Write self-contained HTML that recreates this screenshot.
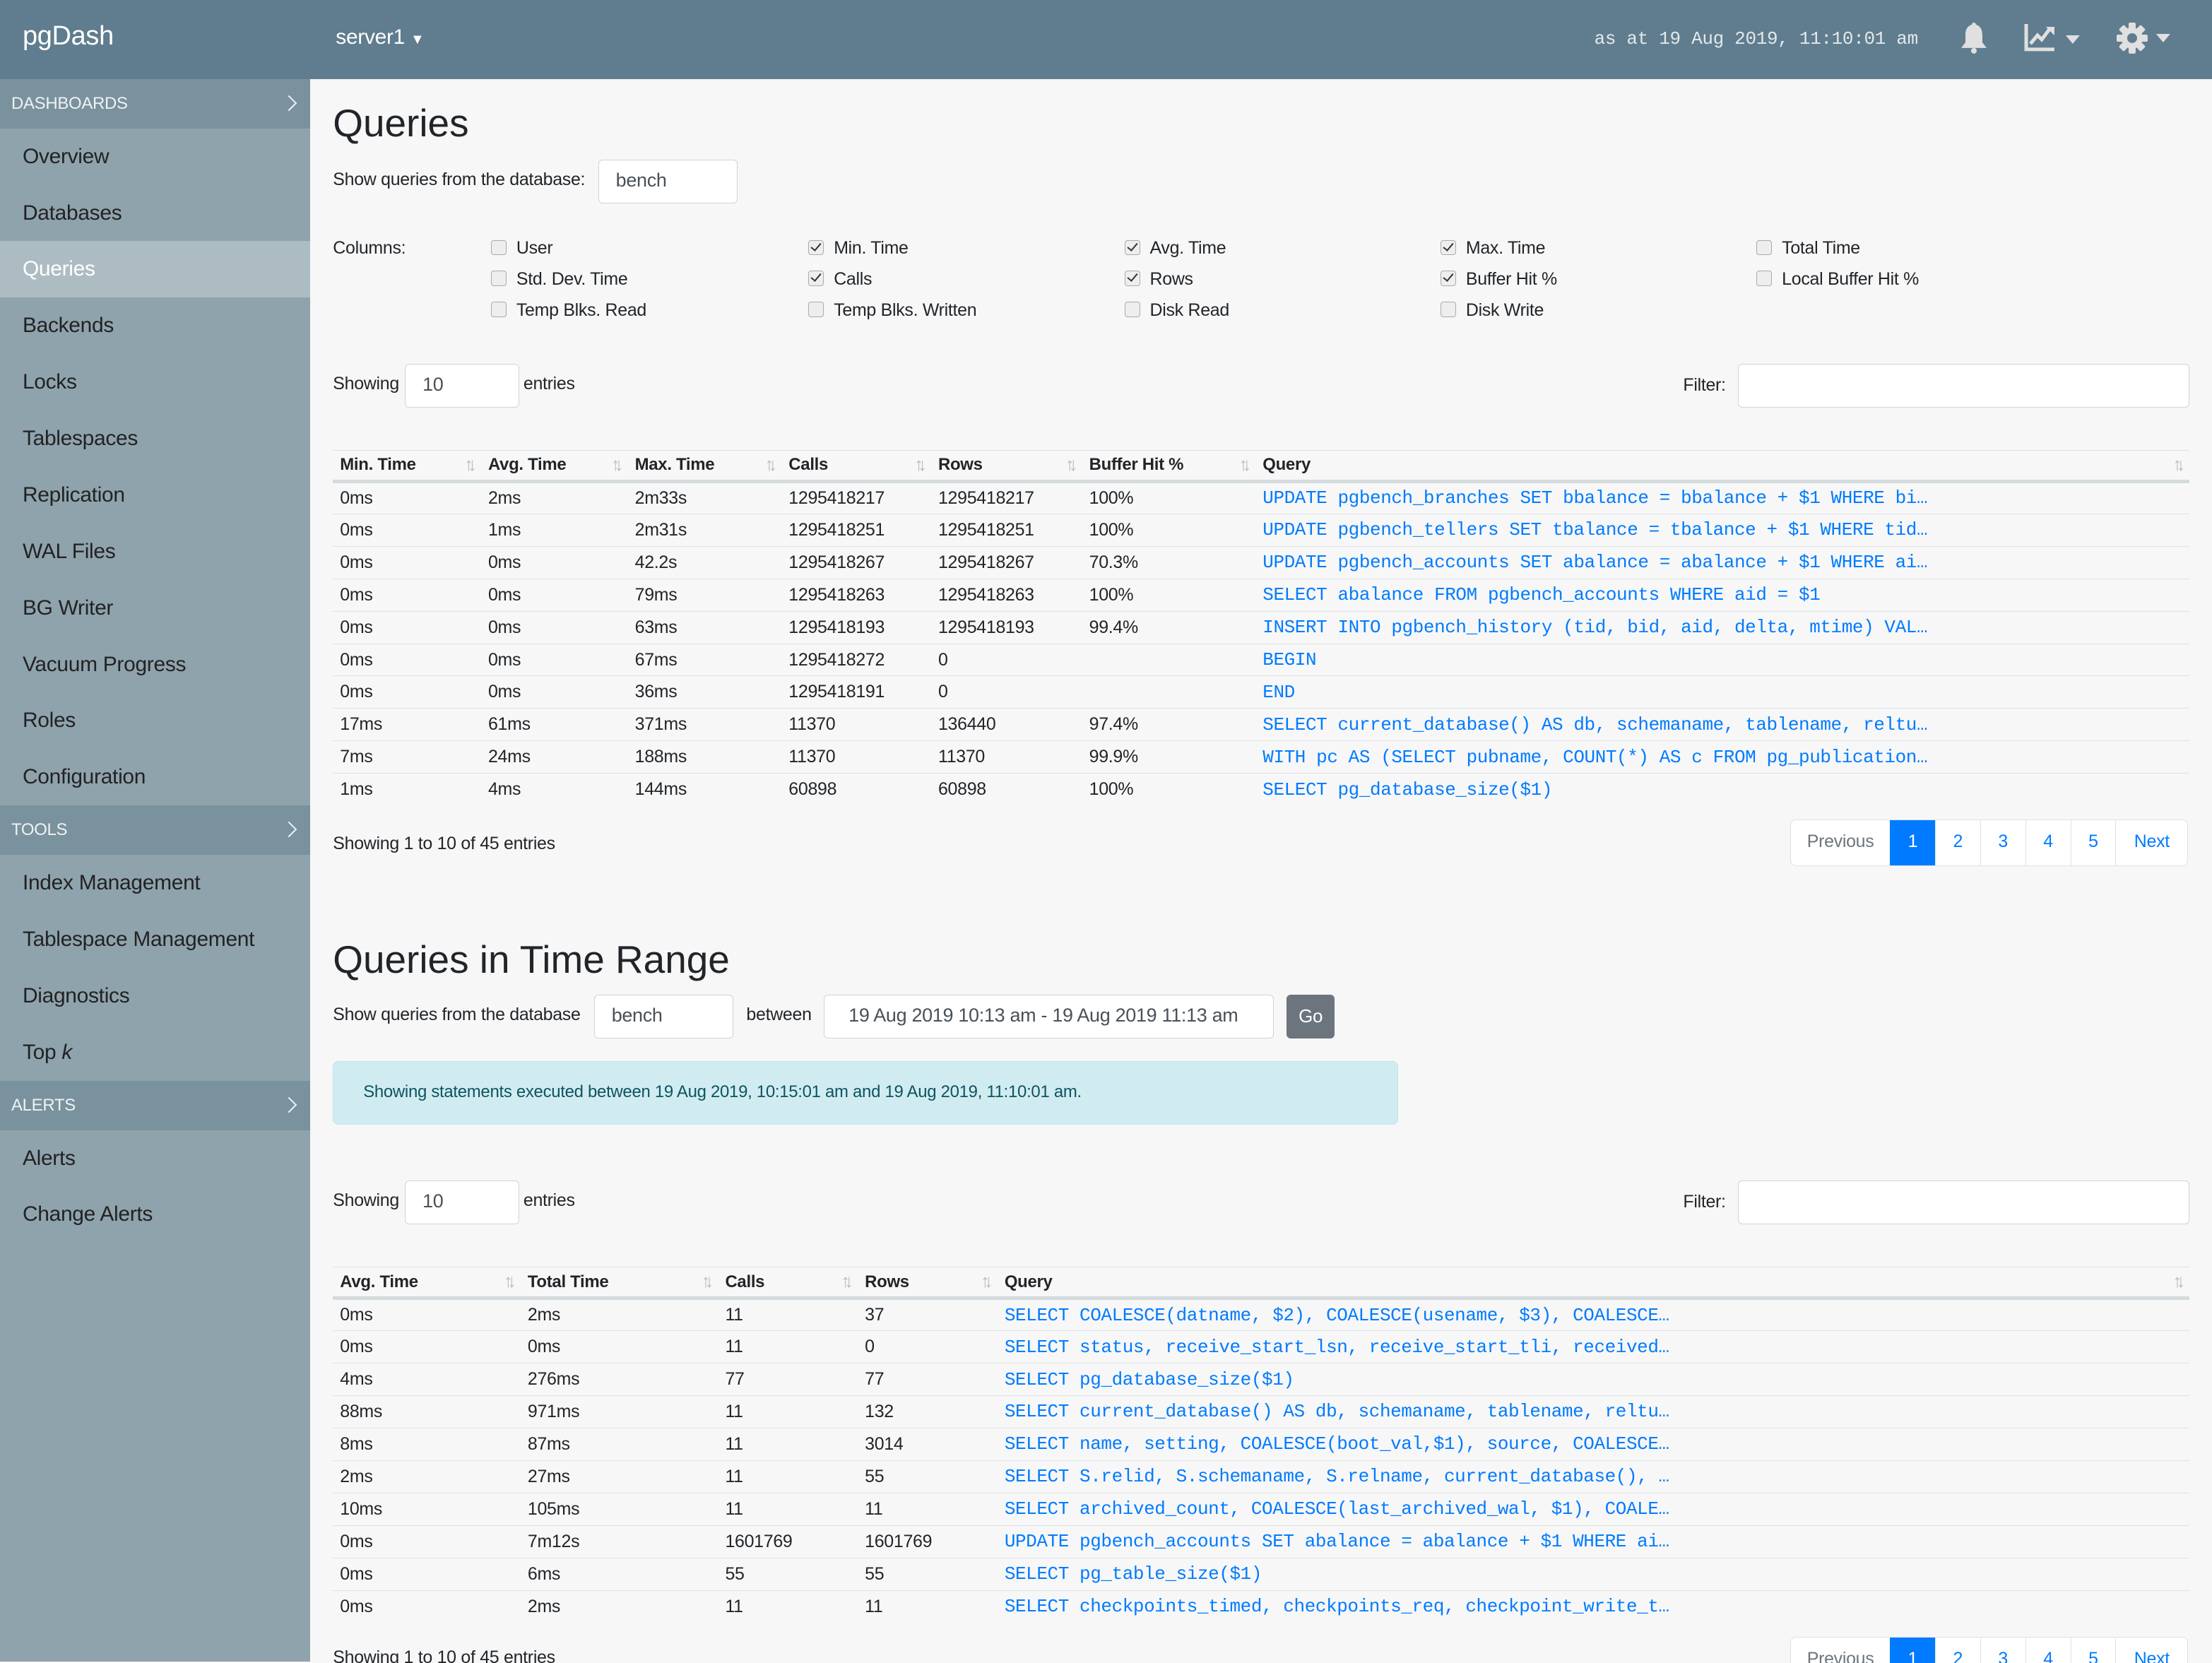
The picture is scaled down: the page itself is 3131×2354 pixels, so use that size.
<!DOCTYPE html>
<html><head><meta charset="utf-8">
<style>
html{zoom:1.997;background:#f7f7f7;overflow:hidden;height:1178px}
*{box-sizing:border-box;margin:0;padding:0}
body{width:1568px;height:1178px;overflow:hidden;background:#f7f7f7;font-family:"Liberation Sans",sans-serif;font-size:12.5px;color:#212529;position:relative;letter-spacing:-0.15px}
.abs{position:absolute}
#hdr{left:0;top:0;width:1568px;height:56px;background:#5f7d8e;color:#fff}
#side{left:0;top:56px;width:220px;height:1122px;background:#8fa3ad}
.sec{height:35px;background:#7a929e;color:#eef2f4;font-size:12px;padding-left:8px;line-height:35px;position:relative}
.sec:after{content:"";position:absolute;right:11px;top:13px;width:7px;height:7px;border-right:1.5px solid #eef;border-top:1.5px solid #eef;transform:rotate(45deg)}
.it{height:40px;line-height:40px;padding-left:16px;font-size:15px;color:#222}
.it.act{background:#adbcc3;color:#fff}
.inp{position:absolute;background:#fff;border:1px solid #ced4da;border-radius:3px;font-size:13.5px;color:#495057;padding-left:12px}
.cb{position:absolute;font-size:12.5px}
.cb i{display:inline-block;width:11px;height:11px;border:1px solid #aaa;border-radius:2px;background:#eee;vertical-align:-1px;margin-right:7px;position:relative;font-style:normal}
.cb i.c:after{content:"";position:absolute;left:3px;top:0px;width:3px;height:6px;border-right:1.5px solid #333;border-bottom:1.5px solid #333;transform:rotate(40deg)}
table{position:absolute;border-collapse:collapse;table-layout:fixed}
th{text-align:left;font-weight:bold;height:22px;padding-left:5px;border-top:1px solid #dee2e6;border-bottom:3px solid #d5dadd;position:relative;font-size:12px}
th .s{position:absolute;right:7px;top:2px;color:#bbb;font-weight:normal;font-size:13px;letter-spacing:-4px}
td{height:23px;padding-left:5px;border-top:1px solid #dee2e6;white-space:nowrap;overflow:hidden;font-size:12.5px}
td.q{font-family:"Liberation Mono",monospace;font-size:13px;color:#007bff;letter-spacing:-0.2px}
.pg{position:absolute;display:flex;height:33px;border:1px solid #dee2e6;border-radius:4px;background:#fff;overflow:hidden}
.pg div{border-left:1px solid #dee2e6;width:32px;text-align:center;line-height:31px;color:#007bff;font-size:12.5px}
.pg div:first-child{border-left:none;width:70px;color:#6c757d}
.pg div.a{background:#007bff;color:#fff;border-color:#007bff}
.pg div:last-child{width:51px}
h1{position:absolute;font-weight:normal;font-size:27.5px;color:#212529;letter-spacing:0}
</style></head><body>
<div id="hdr" class="abs">
 <div class="abs" style="left:16px;top:15px;font-size:19px">pgDash</div>
 <div class="abs" style="left:238px;top:18px;font-size:15px">server1 <span style="font-size:10px">▼</span></div>
 <div class="abs" style="left:1130px;top:20px;font-family:'Liberation Mono',monospace;font-size:13px;color:#e4e8ea">as at 19 Aug 2019, 11:10:01 am</div>
 <svg class="abs" style="left:1388px;top:15px" width="22" height="24" viewBox="0 0 22 24"><path d="M11 1c1 0 1.5.8 1.5 1.5C16 3.5 17 6.5 17 10v5l3 4H2l3-4v-5c0-3.5 1-6.5 4.5-7.5C9.5 1.8 10 1 11 1z" fill="#e0e0e0"/><circle cx="11" cy="21" r="2" fill="#e0e0e0"/></svg>
 <svg class="abs" style="left:1434px;top:16px" width="46" height="22" viewBox="0 0 46 22"><path d="M2 1v18h20" stroke="#e0e0e0" stroke-width="2.5" fill="none"/><path d="M5 15l5-6 3 3 6-8" stroke="#e0e0e0" stroke-width="2.5" fill="none"/><path d="M16 3h6v6z" fill="#e0e0e0"/><path d="M30 9h10l-5 6z" fill="#e0e0e0"/></svg>
 <svg class="abs" style="left:1499px;top:14px" width="42" height="26" viewBox="0 0 42 26"><g transform="translate(12,13)" fill="#e0e0e0"><circle r="7.5"/><g id="t"><rect x="-2.5" y="-11" width="5" height="22" rx="1"/></g><use href="#t" transform="rotate(45)"/><use href="#t" transform="rotate(90)"/><use href="#t" transform="rotate(135)"/></g><circle cx="12" cy="13" r="3.5" fill="#5f7d8e"/><path d="M29 10h10l-5 6z" fill="#e0e0e0"/></svg>
</div>
<div id="side" class="abs">
 <div class="sec">DASHBOARDS</div>
 <div class="it">Overview</div><div class="it">Databases</div><div class="it act">Queries</div><div class="it">Backends</div><div class="it">Locks</div><div class="it">Tablespaces</div><div class="it">Replication</div><div class="it">WAL Files</div><div class="it">BG Writer</div><div class="it">Vacuum Progress</div><div class="it">Roles</div><div class="it">Configuration</div>
 <div class="sec">TOOLS</div>
 <div class="it">Index Management</div><div class="it">Tablespace Management</div><div class="it">Diagnostics</div><div class="it">Top <i>k</i></div>
 <div class="sec">ALERTS</div>
 <div class="it">Alerts</div><div class="it">Change Alerts</div>
</div>

<h1 style="left:236px;top:71px">Queries</h1>
<div class="abs" style="left:236px;top:120px">Show queries from the database:</div>
<div class="inp" style="left:424px;top:113px;width:99px;height:31px;line-height:29px">bench</div>
<div class="abs" style="left:236px;top:169px">Columns:</div>
<div class="cb" style="left:348px;top:169px"><i></i>User</div>
<div class="cb" style="left:348px;top:191px"><i></i>Std. Dev. Time</div>
<div class="cb" style="left:348px;top:213px"><i></i>Temp Blks. Read</div>
<div class="cb" style="left:573px;top:169px"><i class="c"></i>Min. Time</div>
<div class="cb" style="left:573px;top:191px"><i class="c"></i>Calls</div>
<div class="cb" style="left:573px;top:213px"><i></i>Temp Blks. Written</div>
<div class="cb" style="left:797px;top:169px"><i class="c"></i>Avg. Time</div>
<div class="cb" style="left:797px;top:191px"><i class="c"></i>Rows</div>
<div class="cb" style="left:797px;top:213px"><i></i>Disk Read</div>
<div class="cb" style="left:1021px;top:169px"><i class="c"></i>Max. Time</div>
<div class="cb" style="left:1021px;top:191px"><i class="c"></i>Buffer Hit %</div>
<div class="cb" style="left:1021px;top:213px"><i></i>Disk Write</div>
<div class="cb" style="left:1245px;top:169px"><i></i>Total Time</div>
<div class="cb" style="left:1245px;top:191px"><i></i>Local Buffer Hit %</div>

<div class="abs" style="left:236px;top:265px">Showing</div>
<div class="inp" style="left:287px;top:258px;width:81px;height:31px;line-height:29px">10</div>
<div class="abs" style="left:371px;top:265px">entries</div>
<div class="abs" style="left:1193px;top:266px">Filter:</div>
<div class="inp" style="left:1232px;top:258px;width:320px;height:31px"></div>

<table style="left:236px;top:319px;width:1316px">
<colgroup><col style="width:105px"><col style="width:104px"><col style="width:109px"><col style="width:106px"><col style="width:107px"><col style="width:123px"><col></colgroup>
<tr><th>Min. Time<span class="s">↑↓</span></th><th>Avg. Time<span class="s">↑↓</span></th><th>Max. Time<span class="s">↑↓</span></th><th>Calls<span class="s">↑↓</span></th><th>Rows<span class="s">↑↓</span></th><th>Buffer Hit %<span class="s">↑↓</span></th><th>Query<span class="s">↑↓</span></th></tr>
<tr><td>0ms</td><td>2ms</td><td>2m33s</td><td>1295418217</td><td>1295418217</td><td>100%</td><td class="q">UPDATE pgbench_branches SET bbalance = bbalance + $1 WHERE bi…</td></tr>
<tr><td>0ms</td><td>1ms</td><td>2m31s</td><td>1295418251</td><td>1295418251</td><td>100%</td><td class="q">UPDATE pgbench_tellers SET tbalance = tbalance + $1 WHERE tid…</td></tr>
<tr><td>0ms</td><td>0ms</td><td>42.2s</td><td>1295418267</td><td>1295418267</td><td>70.3%</td><td class="q">UPDATE pgbench_accounts SET abalance = abalance + $1 WHERE ai…</td></tr>
<tr><td>0ms</td><td>0ms</td><td>79ms</td><td>1295418263</td><td>1295418263</td><td>100%</td><td class="q">SELECT abalance FROM pgbench_accounts WHERE aid = $1</td></tr>
<tr><td>0ms</td><td>0ms</td><td>63ms</td><td>1295418193</td><td>1295418193</td><td>99.4%</td><td class="q">INSERT INTO pgbench_history (tid, bid, aid, delta, mtime) VAL…</td></tr>
<tr><td>0ms</td><td>0ms</td><td>67ms</td><td>1295418272</td><td>0</td><td></td><td class="q">BEGIN</td></tr>
<tr><td>0ms</td><td>0ms</td><td>36ms</td><td>1295418191</td><td>0</td><td></td><td class="q">END</td></tr>
<tr><td>17ms</td><td>61ms</td><td>371ms</td><td>11370</td><td>136440</td><td>97.4%</td><td class="q">SELECT current_database() AS db, schemaname, tablename, reltu…</td></tr>
<tr><td>7ms</td><td>24ms</td><td>188ms</td><td>11370</td><td>11370</td><td>99.9%</td><td class="q">WITH pc AS (SELECT pubname, COUNT(*) AS c FROM pg_publication…</td></tr>
<tr><td>1ms</td><td>4ms</td><td>144ms</td><td>60898</td><td>60898</td><td>100%</td><td class="q">SELECT pg_database_size($1)</td></tr>
</table>
<div class="abs" style="left:236px;top:591px">Showing 1 to 10 of 45 entries</div>
<div class="pg" style="left:1269px;top:581px"><div>Previous</div><div class="a">1</div><div>2</div><div>3</div><div>4</div><div>5</div><div>Next</div></div>

<h1 style="left:236px;top:664px">Queries in Time Range</h1>
<div class="abs" style="left:236px;top:712px">Show queries from the database</div>
<div class="inp" style="left:421px;top:705px;width:99px;height:31px;line-height:29px">bench</div>
<div class="abs" style="left:529px;top:712px">between</div>
<div class="inp" style="left:584px;top:705px;width:319px;height:31px;line-height:29px;padding-left:17px">19 Aug 2019 10:13 am - 19 Aug 2019 11:13 am</div>
<div class="abs" style="left:912px;top:705px;width:34px;height:31px;background:#6c757d;color:#fff;border-radius:3px;text-align:center;line-height:31px;font-size:13px">Go</div>
<div class="abs" style="left:236px;top:752px;width:755px;height:45px;background:#d1ecf1;border:1px solid #bee5eb;border-radius:4px;color:#0c5460;padding-left:21px;line-height:43px;font-size:12px">Showing statements executed between 19 Aug 2019, 10:15:01 am and 19 Aug 2019, 11:10:01 am.</div>

<div class="abs" style="left:236px;top:844px">Showing</div>
<div class="inp" style="left:287px;top:837px;width:81px;height:31px;line-height:29px">10</div>
<div class="abs" style="left:371px;top:844px">entries</div>
<div class="abs" style="left:1193px;top:845px">Filter:</div>
<div class="inp" style="left:1232px;top:837px;width:320px;height:31px"></div>

<table style="left:236px;top:898px;width:1316px">
<colgroup><col style="width:133px"><col style="width:140px"><col style="width:99px"><col style="width:99px"><col></colgroup>
<tr><th>Avg. Time<span class="s">↑↓</span></th><th>Total Time<span class="s">↑↓</span></th><th>Calls<span class="s">↑↓</span></th><th>Rows<span class="s">↑↓</span></th><th>Query<span class="s">↑↓</span></th></tr>
<tr><td>0ms</td><td>2ms</td><td>11</td><td>37</td><td class="q">SELECT COALESCE(datname, $2), COALESCE(usename, $3), COALESCE…</td></tr>
<tr><td>0ms</td><td>0ms</td><td>11</td><td>0</td><td class="q">SELECT status, receive_start_lsn, receive_start_tli, received…</td></tr>
<tr><td>4ms</td><td>276ms</td><td>77</td><td>77</td><td class="q">SELECT pg_database_size($1)</td></tr>
<tr><td>88ms</td><td>971ms</td><td>11</td><td>132</td><td class="q">SELECT current_database() AS db, schemaname, tablename, reltu…</td></tr>
<tr><td>8ms</td><td>87ms</td><td>11</td><td>3014</td><td class="q">SELECT name, setting, COALESCE(boot_val,$1), source, COALESCE…</td></tr>
<tr><td>2ms</td><td>27ms</td><td>11</td><td>55</td><td class="q">SELECT S.relid, S.schemaname, S.relname, current_database(), …</td></tr>
<tr><td>10ms</td><td>105ms</td><td>11</td><td>11</td><td class="q">SELECT archived_count, COALESCE(last_archived_wal, $1), COALE…</td></tr>
<tr><td>0ms</td><td>7m12s</td><td>1601769</td><td>1601769</td><td class="q">UPDATE pgbench_accounts SET abalance = abalance + $1 WHERE ai…</td></tr>
<tr><td>0ms</td><td>6ms</td><td>55</td><td>55</td><td class="q">SELECT pg_table_size($1)</td></tr>
<tr><td>0ms</td><td>2ms</td><td>11</td><td>11</td><td class="q">SELECT checkpoints_timed, checkpoints_req, checkpoint_write_t…</td></tr>
</table>
<div class="abs" style="left:236px;top:1168px">Showing 1 to 10 of 45 entries</div>
<div class="pg" style="left:1269px;top:1160px"><div>Previous</div><div class="a">1</div><div>2</div><div>3</div><div>4</div><div>5</div><div>Next</div></div>
</body></html>
